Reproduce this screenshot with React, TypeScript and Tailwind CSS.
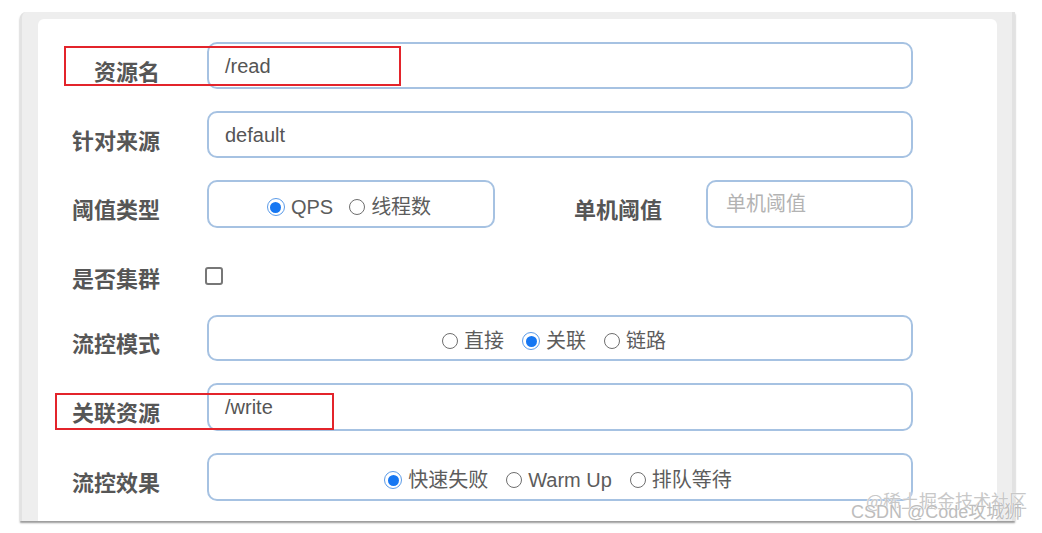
import React from 'react';

const labelCls =
  "w-[122px] shrink-0 text-right text-[22px] leading-none font-bold text-[#565656] translate-y-[4px] font-['Noto_Sans_CJK_SC',sans-serif]";
const boxCls =
  "h-full border-2 border-[#a6c2e2] rounded-[10px] bg-white flex items-center text-[20px] text-[#555] font-['Liberation_Sans','Noto_Sans_CJK_SC',sans-serif]";

function Radio({ checked, label }: { checked?: boolean; label: string }) {
  return (
    <span className="flex items-center gap-[6px]">
      {checked ? (
        <span className="w-[18px] h-[18px] rounded-full border-[1.5px] border-[#5b9be8] bg-white flex items-center justify-center">
          <span className="w-[11px] h-[11px] rounded-full bg-[#1677f2]" />
        </span>
      ) : (
        <span className="w-[16px] h-[16px] rounded-full border-[1.5px] border-[#6e6e6e] bg-white" />
      )}
      <span className="text-[#5c5c5c]">{label}</span>
    </span>
  );
}

function Row({ label, mt, h, children }: { label: string; mt: string; h: string; children: React.ReactNode }) {
  return (
    <div className={`flex items-center ${mt} ${h}`}>
      <div className={labelCls}>{label}</div>
      <div className="ml-[47px] flex h-full items-center">{children}</div>
    </div>
  );
}

export default function App() {
  return (
    <div className="relative w-[1042px] h-[533px] bg-white overflow-hidden pl-[20px] pt-[12px]">
      <div className="w-[995px] h-[509px] bg-[#eeeeee] rounded-tl-[6px] border-l-2 border-r-[3px] border-[#e2e2e2] shadow-[0_2px_2px_rgba(0,0,0,0.4)] pl-[16px] pr-[15px] pt-[7px]">
        <div className="h-full bg-white rounded-t-[6px] pt-[23px] flex flex-col">
          <Row label="资源名" mt="mt-0" h="h-[47px]">
            <div className={`${boxCls} w-[706px] pl-[16px]`}>/read</div>
          </Row>
          <Row label="针对来源" mt="mt-[22px]" h="h-[47px]">
            <div className={`${boxCls} w-[706px] pl-[16px]`}>default</div>
          </Row>
          <Row label="阈值类型" mt="mt-[22px]" h="h-[48px]">
            <div className={`${boxCls} w-[288px] justify-center gap-[16px] pr-[4px] pt-[6px]`}>
              <Radio checked label="QPS" />
              <Radio label="线程数" />
            </div>
            <div className="w-[211px] pr-[44px] text-right text-[22px] leading-none font-bold text-[#565656] translate-y-[4px] font-['Noto_Sans_CJK_SC',sans-serif]">
              单机阈值
            </div>
            <div className={`${boxCls} w-[207px] pl-[18px] text-[#b3b3b3]`}>单机阈值</div>
          </Row>
          <Row label="是否集群" mt="mt-[22px]" h="h-[46px]">
            <span className="w-[18px] h-[18px] -ml-[2px] translate-y-[3px] rounded-[3px] border-2 border-[#777] bg-white" />
          </Row>
          <Row label="流控模式" mt="mt-[19px]" h="h-[46px]">
            <div className={`${boxCls} w-[706px] justify-center gap-[18px] pr-[12px] pt-[6px]`}>
              <Radio label="直接" />
              <Radio checked label="关联" />
              <Radio label="链路" />
            </div>
          </Row>
          <Row label="关联资源" mt="mt-[22px]" h="h-[48px]">
            <div className={`${boxCls} w-[706px] pl-[16px]`}>/write</div>
          </Row>
          <Row label="流控效果" mt="mt-[22px]" h="h-[48px]">
            <div className={`${boxCls} w-[706px] justify-center gap-[18px] pr-[4px] pt-[6px]`}>
              <Radio checked label="快速失败" />
              <Radio label="Warm Up" />
              <Radio label="排队等待" />
            </div>
          </Row>
        </div>
      </div>

      {/* red highlight frames */}
      <div className="absolute left-[64px] top-[46px] w-[337px] h-[40px] border-2 border-[#e3242b]" />
      <div className="absolute left-[55px] top-[393px] w-[279px] h-[37px] border-2 border-[#e3242b]" />

      {/* watermarks */}
      <div className="absolute left-[866px] top-[491px] text-[18px] leading-none text-[#c8c8c8] font-['Noto_Sans_CJK_SC',sans-serif] [text-shadow:0_0_1px_#fff,0_0_1px_#fff]">
        @稀土掘金技术社区
      </div>
      <div className="absolute left-[851px] top-[503px] text-[18px] leading-none text-[#bdbdbd] font-['Liberation_Sans','Noto_Sans_CJK_SC',sans-serif] [text-shadow:0_0_1px_#fff,0_0_1px_#fff]">
        CSDN @Code攻城狮
      </div>
    </div>
  );
}
